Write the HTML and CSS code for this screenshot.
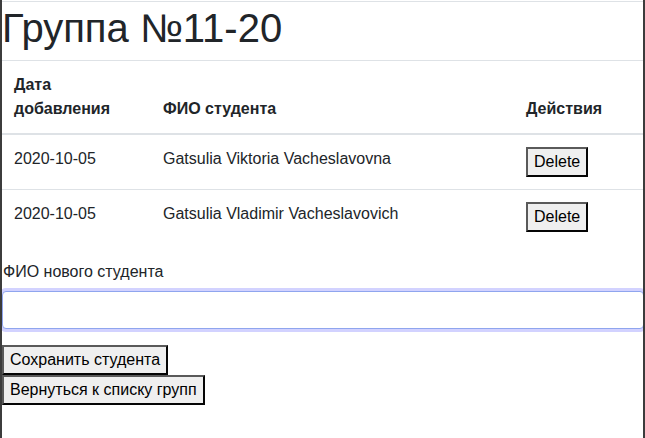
FILE: index.html
```html
<!DOCTYPE html>
<html lang="ru">
<head>
<meta charset="utf-8">
<link rel="stylesheet" href="styles.css">
</head>
<body>
<div class="page">
  <h1 class="title">Группа №11-20</h1>
  <table class="table">
    <thead>
      <tr>
        <th class="col-date">Дата<br>добавления</th>
        <th class="col-name">ФИО студента</th>
        <th class="col-act">Действия</th>
      </tr>
    </thead>
    <tbody>
      <tr>
        <td>2020-10-05</td>
        <td>Gatsulia Viktoria Vacheslavovna</td>
        <td><button class="btn">Delete</button></td>
      </tr>
      <tr>
        <td>2020-10-05</td>
        <td>Gatsulia Vladimir Vacheslavovich</td>
        <td><button class="btn">Delete</button></td>
      </tr>
    </tbody>
  </table>
  <div class="form-group">
    <label class="label" for="fio">ФИО нового студента</label>
    <input class="input" id="fio" type="text">
  </div>
  <button class="btn btn-block">Сохранить студента</button>
  <button class="btn btn-block">Вернуться к списку групп</button>
</div>
</body>
</html>
```

FILE: styles.css
```css
html, body {
  margin: 0;
  padding: 0;
  background: #fff;
}
body {
  font-family: "Liberation Sans", Arial, sans-serif;
  font-size: 16px;
  line-height: 1.5;
  color: #212529;
  border-left: 2px solid #3c3c3c;
  border-right: 2px solid #3c3c3c;
  min-height: 438px;
  box-sizing: border-box;
}
.page {
  margin-top: 1px;
  border-top: 1px solid #dee2e6;
}
.title {
  margin: 2px 0 8px 0;
  font-size: 40px;
  font-weight: 400;
  line-height: 48px;
}
.table {
  width: 100%;
  border-collapse: collapse;
  margin-bottom: 16px;
}
.table th,
.table td {
  padding: 12px;
  text-align: left;
  vertical-align: top;
  border-top: 1px solid #dee2e6;
}
.table th {
  vertical-align: bottom;
  border-bottom: 2px solid #dee2e6;
  font-weight: 700;
}
.col-date { width: 125px; }
.col-act { width: 105px; }
.form-group {
  margin-bottom: 16px;
}
.label {
  display: block;
  margin-bottom: 7px;
  margin-left: 1px;
}
.input {
  display: block;
  box-sizing: border-box;
  width: calc(100% + 1px);
  height: 38px;
  margin: 0;
  border: 1px solid #8fa5ee;
  border-radius: 4px;
  box-shadow: 0 0 0 3px #d2d2ff;
  outline: none;
  font: inherit;
}
.btn {
  font-family: "Liberation Sans", Arial, sans-serif;
  font-size: 16px;
  line-height: 24px;
  padding: 1px 6px;
  margin: 0;
  color: #000;
  background: #efefef;
  border: 2px outset #5a5a5a;
  border-radius: 0;
}
.btn-block {
  display: block;
}
```
